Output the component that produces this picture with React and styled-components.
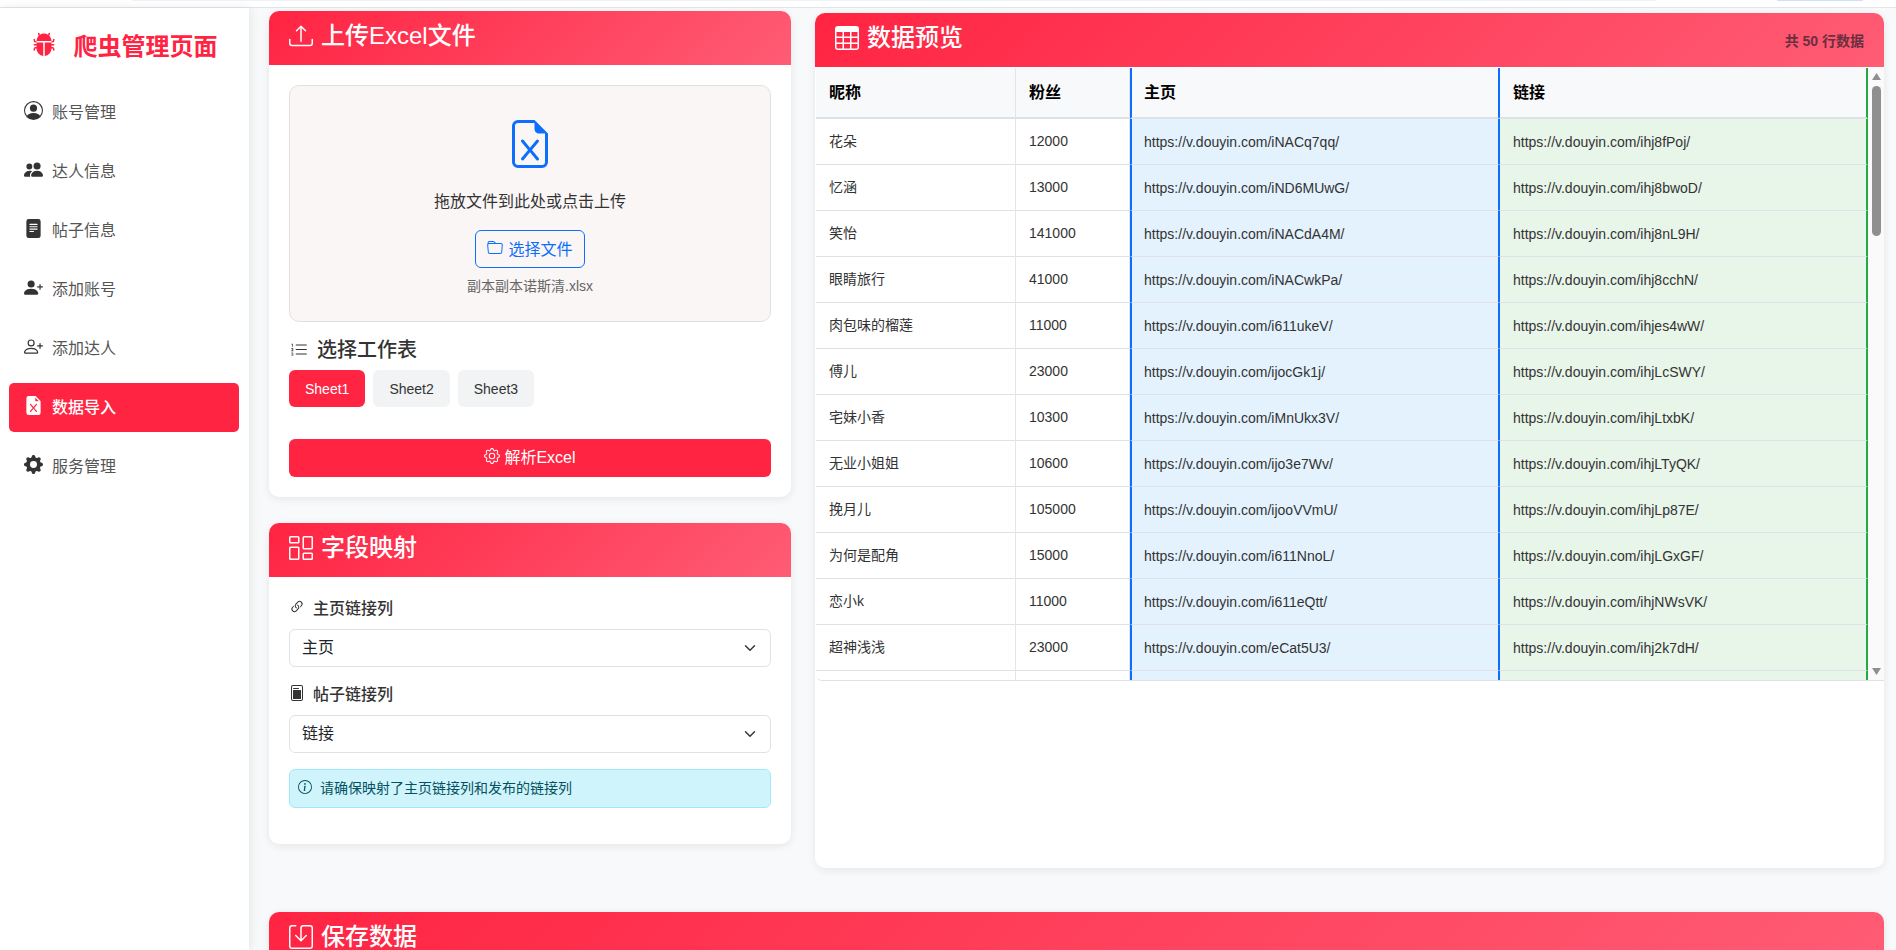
import React from "react";
import styled, { createGlobalStyle } from "styled-components";
import {
  BsBugFill,
  BsPersonCircle,
  BsPeopleFill,
  BsFileTextFill,
  BsPersonPlusFill,
  BsPersonPlus,
  BsFileEarmarkExcelFill,
  BsGearFill,
  BsUpload,
  BsFileEarmarkExcel,
  BsFolder,
  BsListOl,
  BsGear,
  BsColumnsGap,
  BsLink45Deg,
  BsFilePost,
  BsInfoCircle,
  BsTable,
  BsSave,
} from "react-icons/bs";

const RED = "#ff2442";
const FONT = `"Liberation Sans", "Noto Sans CJK SC", sans-serif`;

const GlobalStyle = createGlobalStyle`
  html, body {
    margin: 0;
    height: 100%;
    overflow: hidden;
    background: #f8f9fa;
    font-family: ${FONT};
    color: #212529;
  }
  * { box-sizing: border-box; }
`;

const Page = styled.div`
  height: 950px;
  display: flex;
  flex-direction: column;
  overflow: hidden;
`;

const TopBar = styled.div`
  height: 8px;
  flex: none;
  background: #fff;
  border-bottom: 1px solid #e3e5e9;
  display: flex;
  justify-content: space-between;
  align-items: flex-start;
  padding: 0 33px 0 132px;
`;

const TopStrip = styled.div`
  width: ${(p) => p.$w}px;
  height: 1px;
  border-radius: 0 0 6px 6px;
  background: ${(p) => p.$bg};
`;

const Body = styled.div`
  flex: 1;
  display: flex;
  min-height: 0;
`;

const Sidebar = styled.aside`
  width: 249px;
  flex: none;
  background: #fff;
  box-shadow: 2px 0 10px rgba(0, 0, 0, 0.08);
  padding: 0 10px 0 9px;
  position: relative;
`;

const Logo = styled.div`
  height: 72px;
  display: flex;
  align-items: center;
  justify-content: center;
  gap: 18px;
  padding-left: 1px;
  margin-bottom: 8px;
  color: ${RED};
  font-size: 24px;
  font-weight: 700;
  svg { font-size: 24px; }
`;

const NavList = styled.nav`
  display: flex;
  flex-direction: column;
  gap: 10px;
`;

const NavItem = styled.a`
  height: 49px;
  display: flex;
  align-items: center;
  gap: 9px;
  padding: 0 0 4px 15px;
  border-radius: 5px;
  font-size: 16px;
  color: ${(p) => (p.$active ? "#fff" : "#555")};
  background: ${(p) => (p.$active ? RED : "transparent")};
  font-weight: ${(p) => (p.$active ? 500 : 400)};
  svg {
    font-size: 19px;
    color: ${(p) => (p.$active ? "#fff" : "#333")};
  }
`;

const Main = styled.main`
  flex: 1;
  min-width: 0;
  padding: 3px 12px 0 20px;
`;

const Columns = styled.div`
  display: grid;
  grid-template-columns: 522px 1fr;
  column-gap: 24px;
  margin-bottom: 44px;
`;

const LeftColumn = styled.div`
  display: flex;
  flex-direction: column;
  gap: 26px;
`;

const Card = styled.section`
  background: #fff;
  border-radius: 10px;
  box-shadow: 0 2px 8px rgba(0, 0, 0, 0.08);
  overflow: hidden;
  margin-top: ${(p) => p.$top || 0}px;
  height: ${(p) => (p.$height ? `${p.$height}px` : "auto")};
`;

const CardHeader = styled.header`
  height: 54px;
  display: flex;
  align-items: center;
  justify-content: space-between;
  padding: 0 20px;
  color: #fff;
  background: linear-gradient(135deg, #ff2442 0%, #ff5c75 100%);
`;

const CardTitle = styled.h2`
  margin: 0;
  padding-bottom: 4px;
  font-size: 24px;
  font-weight: 500;
  line-height: 1;
  display: flex;
  align-items: center;
  gap: 8px;
  svg { font-size: 24px; }
`;

const RowCount = styled.span`
  font-size: 14px;
  font-weight: 700;
  color: #6a2f3e;
`;

const CardBody = styled.div`
  padding: 20px;
`;

const DropZone = styled.div`
  height: 237px;
  border: 1px solid #e0e0e0;
  border-radius: 10px;
  background: #fbf6f6;
  display: flex;
  flex-direction: column;
  align-items: center;
  padding-top: 34px;
`;

const DropIcon = styled.div`
  color: #0d6efd;
  font-size: 48px;
  line-height: 0;
  margin-bottom: 22px;
`;

const DropText = styled.p`
  margin: 0 0 16px;
  font-size: 16px;
  line-height: 24px;
  color: #333;
`;

const OutlineButton = styled.button`
  height: 38px;
  width: 110px;
  border: 1px solid #0d6efd;
  border-radius: 6px;
  background: transparent;
  color: #0d6efd;
  font: 16px ${FONT};
  display: flex;
  align-items: center;
  justify-content: center;
  gap: 5px;
  padding: 0 0 2px;
  svg { font-size: 16px; }
`;

const FileName = styled.div`
  margin-top: 8px;
  font-size: 14px;
  line-height: 21px;
  color: #666;
`;

const SheetHeading = styled.h3`
  margin: 16px 0 8px;
  font-size: 20px;
  font-weight: 500;
  line-height: 24px;
  color: #333;
  display: flex;
  align-items: center;
  gap: 9px;
  svg { font-size: 18px; margin-left: 1px; }
`;

const SheetTabs = styled.div`
  display: flex;
  gap: 8px;
  margin-bottom: 32px;
`;

const SheetTab = styled.button`
  height: 37px;
  padding: 0 16px;
  border: none;
  border-radius: 6px;
  font: 14px ${FONT};
  color: ${(p) => (p.$active ? "#fff" : "#333")};
  background: ${(p) => (p.$active ? RED : "#f1f3f5")};
`;

const ParseButton = styled.button`
  width: 100%;
  height: 38px;
  border: none;
  border-radius: 6px;
  background: ${RED};
  color: #fff;
  font: 16px ${FONT};
  display: flex;
  align-items: center;
  justify-content: center;
  gap: 4px;
  padding: 0 0 4px;
  svg { font-size: 16px; }
`;

const FieldLabel = styled.label`
  display: flex;
  align-items: center;
  gap: 8px;
  height: 24px;
  margin-bottom: 8px;
  padding-bottom: 5px;
  font-size: 16px;
  font-weight: 500;
  color: #333;
  svg { font-size: 16px; }
`;

const FieldSelect = styled.select`
  display: block;
  width: 100%;
  height: 38px;
  margin-bottom: 16px;
  padding: 0 36px 2px 12px;
  border: 1px solid #dee2e6;
  border-radius: 6px;
  background-color: #fff;
  background-image: url("data:image/svg+xml,%3csvg xmlns='http://www.w3.org/2000/svg' viewBox='0 0 16 16'%3e%3cpath fill='none' stroke='%23343a40' stroke-linecap='round' stroke-linejoin='round' stroke-width='2' d='m2 5 6 6 6-6'/%3e%3c/svg%3e");
  background-repeat: no-repeat;
  background-position: right 12px center;
  background-size: 16px 12px;
  appearance: none;
  font: 16px ${FONT};
  color: #212529;
`;

const InfoNote = styled.div`
  height: 39px;
  margin-bottom: 16px;
  padding: 0 8px 3px;
  display: flex;
  align-items: center;
  gap: 8px;
  border: 1px solid #9eeaf9;
  border-radius: 6px;
  background: #cff4fc;
  color: #055160;
  font-size: 14px;
  svg { font-size: 14px; }
`;

const TableFrame = styled.div`
  display: flex;
  margin: 1px 0 0 1px;
  height: 613px;
  border-bottom: 1px solid #dee2e6;
  border-radius: 0 0 0 6px;
  overflow: hidden;
`;

const TableClip = styled.div`
  flex: 1;
  min-width: 0;
  overflow: hidden;
`;

const ScrollTrack = styled.div`
  width: 16px;
  flex: none;
  background: #fafafa;
  display: flex;
  flex-direction: column;
  align-items: center;
  padding: 5px 0 5px 1px;
`;

const ScrollArrow = styled.svg`
  width: 9px;
  height: 7px;
  flex: none;
  fill: #8f8f8f;
`;

const ScrollThumb = styled.div`
  width: 9px;
  height: 150px;
  margin-top: 6px;
  border-radius: 5px;
  background: #8f8f8f;
  margin-bottom: auto;
`;

const Table = styled.table`
  width: 1052px;
  table-layout: fixed;
  border-collapse: separate;
  border-spacing: 0;
  font-size: 14px;
`;

// 主页 is the blue column, 链接 the green one
const edgeBorders = (tone) => {
  if (tone === "home") return "border-left: 2px solid #0d6efd; border-right: 1px solid #0d6efd; padding-left: 12px;";
  if (tone === "post") return "border-left: 1px solid #0d6efd; border-right: 2px solid #28a745;";
  return "border-right: 1px solid #e3e5e9;";
};

const HeadCell = styled.th`
  height: 51px;
  padding: 0 13px 3px;
  text-align: left;
  font-size: 16px;
  font-weight: 700;
  color: #000;
  background: #f8f9fa;
  border-bottom: 2px solid #dee2e6;
  ${(p) => edgeBorders(p.$tone)}
`;

const Cell = styled.td`
  height: 46px;
  padding: ${(p) => (p.$tone ? "1px 13px 0" : p.$name ? "0 13px 4px" : "0 13px 2px")};
  color: #333;
  border-bottom: 1px solid #dee2e6;
  background: ${(p) => (p.$tone === "home" ? "#e3f2fd" : p.$tone === "post" ? "#e8f5e9" : "#fff")};
  ${(p) => edgeBorders(p.$tone)}
`;

const navItems = [
  { label: "账号管理", Icon: BsPersonCircle },
  { label: "达人信息", Icon: BsPeopleFill },
  { label: "帖子信息", Icon: BsFileTextFill },
  { label: "添加账号", Icon: BsPersonPlusFill },
  { label: "添加达人", Icon: BsPersonPlus },
  { label: "数据导入", Icon: BsFileEarmarkExcelFill, active: true },
  { label: "服务管理", Icon: BsGearFill },
];

const rows = [
  ["花朵", "12000", "iNACq7qq", "ihj8fPoj"],
  ["忆涵", "13000", "iND6MUwG", "ihj8bwoD"],
  ["笑怡", "141000", "iNACdA4M", "ihj8nL9H"],
  ["眼睛旅行", "41000", "iNACwkPa", "ihj8cchN"],
  ["肉包味的榴莲", "11000", "i611ukeV", "ihjes4wW"],
  ["傅儿", "23000", "ijocGk1j", "ihjLcSWY"],
  ["宅妹小香", "10300", "iMnUkx3V", "ihjLtxbK"],
  ["无业小姐姐", "10600", "ijo3e7Wv", "ihjLTyQK"],
  ["挽月儿", "105000", "ijooVVmU", "ihjLp87E"],
  ["为何是配角", "15000", "i611NnoL", "ihjLGxGF"],
  ["恋小k", "11000", "i611eQtt", "ihjNWsVK"],
  ["超神浅浅", "23000", "eCat5U3", "ihj2k7dH"],
];

const link = (code) => `https://v.douyin.com/${code}/`;

const App = () => {
  return (
    <Page>
      <GlobalStyle />
      <TopBar>
        <TopStrip $w={1525} $bg="#eef3fb" />
        <TopStrip $w={86} $bg="#cfe0fa" />
      </TopBar>
      <Body>
        <Sidebar>
          <Logo>
            <BsBugFill />
            爬虫管理页面
          </Logo>
          <NavList>
            {navItems.map(({ label, Icon, active }) => (
              <NavItem key={label} $active={active}>
                <Icon />
                {label}
              </NavItem>
            ))}
          </NavList>
        </Sidebar>
        <Main>
          <Columns>
            <LeftColumn>
              <Card>
                <CardHeader>
                  <CardTitle>
                    <BsUpload />
                    上传Excel文件
                  </CardTitle>
                </CardHeader>
                <CardBody>
                  <DropZone>
                    <DropIcon>
                      <BsFileEarmarkExcel />
                    </DropIcon>
                    <DropText>拖放文件到此处或点击上传</DropText>
                    <OutlineButton>
                      <BsFolder />
                      选择文件
                    </OutlineButton>
                    <FileName>副本副本诺斯清.xlsx</FileName>
                  </DropZone>
                  <SheetHeading>
                    <BsListOl />
                    选择工作表
                  </SheetHeading>
                  <SheetTabs>
                    <SheetTab $active>Sheet1</SheetTab>
                    <SheetTab>Sheet2</SheetTab>
                    <SheetTab>Sheet3</SheetTab>
                  </SheetTabs>
                  <ParseButton>
                    <BsGear />
                    解析Excel
                  </ParseButton>
                </CardBody>
              </Card>
              <Card>
                <CardHeader>
                  <CardTitle>
                    <BsColumnsGap />
                    字段映射
                  </CardTitle>
                </CardHeader>
                <CardBody>
                  <FieldLabel>
                    <BsLink45Deg />
                    主页链接列
                  </FieldLabel>
                  <FieldSelect defaultValue="主页">
                    <option>主页</option>
                    <option>链接</option>
                  </FieldSelect>
                  <FieldLabel>
                    <BsFilePost />
                    帖子链接列
                  </FieldLabel>
                  <FieldSelect defaultValue="链接">
                    <option>主页</option>
                    <option>链接</option>
                  </FieldSelect>
                  <InfoNote>
                    <BsInfoCircle />
                    请确保映射了主页链接列和发布的链接列
                  </InfoNote>
                </CardBody>
              </Card>
            </LeftColumn>
            <Card $top={2} $height={855}>
              <CardHeader>
                <CardTitle>
                  <BsTable />
                  数据预览
                </CardTitle>
                <RowCount>共 50 行数据</RowCount>
              </CardHeader>
              <TableFrame>
                <TableClip>
                  <Table>
                    <colgroup>
                      <col style={{ width: 200 }} />
                      <col style={{ width: 114 }} />
                      <col style={{ width: 369 }} />
                      <col style={{ width: 369 }} />
                    </colgroup>
                    <thead>
                      <tr>
                        <HeadCell>昵称</HeadCell>
                        <HeadCell>粉丝</HeadCell>
                        <HeadCell $tone="home">主页</HeadCell>
                        <HeadCell $tone="post">链接</HeadCell>
                      </tr>
                    </thead>
                    <tbody>
                      {rows.map(([name, fans, home, post]) => (
                        <tr key={home}>
                          <Cell $name>{name}</Cell>
                          <Cell>{fans}</Cell>
                          <Cell $tone="home">{link(home)}</Cell>
                          <Cell $tone="post">{link(post)}</Cell>
                        </tr>
                      ))}
                      <tr>
                        <Cell />
                        <Cell />
                        <Cell $tone="home" />
                        <Cell $tone="post" />
                      </tr>
                    </tbody>
                  </Table>
                </TableClip>
                <ScrollTrack>
                  <ScrollArrow viewBox="0 0 9 7">
                    <path d="M4.5 0 9 7H0z" />
                  </ScrollArrow>
                  <ScrollThumb />
                  <ScrollArrow viewBox="0 0 9 7">
                    <path d="M0 0h9L4.5 7z" />
                  </ScrollArrow>
                </ScrollTrack>
              </TableFrame>
            </Card>
          </Columns>
          <Card>
            <CardHeader>
              <CardTitle>
                <BsSave />
                保存数据
              </CardTitle>
            </CardHeader>
          </Card>
        </Main>
      </Body>
    </Page>
  );
};

export default App;
